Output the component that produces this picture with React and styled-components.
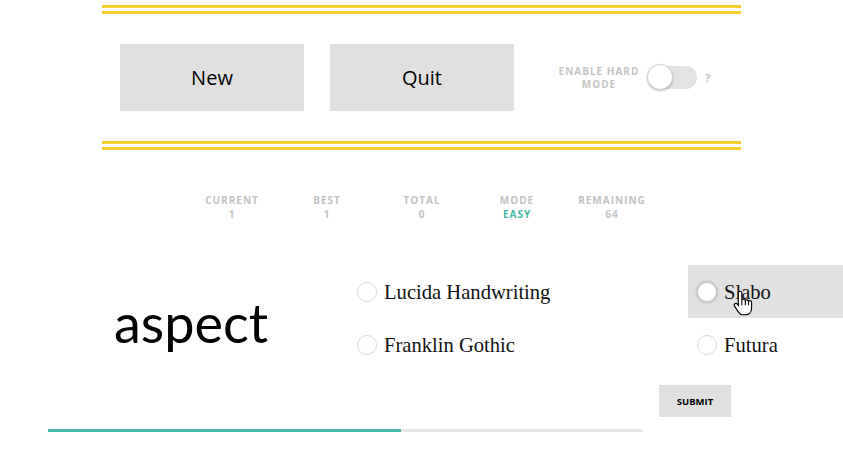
import React from "react";
import styled, { createGlobalStyle } from "styled-components";

const GlobalStyle = createGlobalStyle`
  html, body {
    margin: 0;
    padding: 0;
    background: #ffffff;
    overflow-x: hidden;
  }
  body {
    font-family: "Open Sans", "Liberation Sans", sans-serif;
  }
`;

const stats = [
  { label: "CURRENT", value: "1" },
  { label: "BEST", value: "1" },
  { label: "TOTAL", value: "0" },
  { label: "MODE", value: "EASY", accent: true },
  { label: "REMAINING", value: "64" },
];

const options = [
  { text: "Lucida Handwriting" },
  { text: "Slabo", hover: true },
  { text: "Franklin Gothic" },
  { text: "Futura" },
];

function HandCursor() {
  return (
    <Cursor viewBox="0 0 17 22" width="20" height="26">
      <path
        d="M6 1 C6.8 1 7.5 1.6 7.5 2.5 V8.5 C7.7 8 8.3 7.8 9 7.8 C9.8 7.8 10.3 8.3 10.5 9 C10.7 8.5 11.2 8.3 11.8 8.3 C12.6 8.3 13.1 8.9 13.2 9.5 C13.5 9.1 14 8.9 14.5 9 C15.3 9.1 15.8 9.7 15.8 10.5 V15 C15.8 18.5 13.8 21 10.5 21 H8.5 C6.5 21 5.5 20 4.5 18.5 L1.2 13.5 C0.8 12.8 1 12 1.7 11.6 C2.4 11.2 3.2 11.4 3.7 12 L4.5 13 V2.5 C4.5 1.6 5.2 1 6 1 Z"
        fill="#fff"
        stroke="#000"
        strokeWidth="1"
      />
      <path d="M7.5 8.5 V13 M10.5 9 V13 M13.2 9.5 V13" stroke="#000" strokeWidth="0.9" fill="none" />
    </Cursor>
  );
}

function App() {
  const progress = 59.3;
  return (
    <React.Fragment>
      <GlobalStyle />
      <Header>
        <Rule />
        <Controls>
          <BigButton>New</BigButton>
          <BigButton>Quit</BigButton>
          <ToggleGroup>
            <ToggleLabel>
              ENABLE HARD
              <br />
              MODE
            </ToggleLabel>
            <Track>
              <Knob />
            </Track>
            <Help>?</Help>
          </ToggleGroup>
        </Controls>
        <Rule />
      </Header>

      <Stats>
        {stats.map((s) => (
          <Stat key={s.label}>
            <StatLabel>{s.label}</StatLabel>
            <StatValue $accent={s.accent}>{s.value}</StatValue>
          </Stat>
        ))}
      </Stats>

      <Game>
        <WordBox>
          <Word>aspect</Word>
        </WordBox>
        <Options>
          {options.map((o) => (
            <Option key={o.text} $hover={o.hover}>
              <Radio $hover={o.hover} />
              <OptionText>{o.text}</OptionText>
              {o.hover && <HandCursor />}
            </Option>
          ))}
        </Options>
      </Game>

      <Footer>
        <Submit>SUBMIT</Submit>
        <Progress>
          <ProgressFill style={{ width: `${progress}%` }} />
        </Progress>
      </Footer>
    </React.Fragment>
  );
}

export default App;

const Header = styled.div`
  width: 639px;
  margin: 0 auto;
  padding-top: 5px;
`;

const Rule = styled.div`
  height: 3px;
  border-top: 3px solid #f6cd2e;
  border-bottom: 3px solid #f6cd2e;
`;

const Controls = styled.div`
  display: flex;
  align-items: center;
  gap: 26px;
  padding: 30px 18px 30px;
`;

const BigButton = styled.button`
  width: 184px;
  height: 67px;
  border: none;
  background: #dfe0df;
  color: #000;
  font-family: "Open Sans", sans-serif;
  font-size: 20px;
  padding: 0;
  cursor: pointer;
`;

const ToggleGroup = styled.div`
  display: flex;
  align-items: center;
  margin-left: 15px;
`;

const ToggleLabel = styled.div`
  font-family: "Open Sans", sans-serif;
  font-weight: 700;
  font-size: 10px;
  letter-spacing: 1px;
  line-height: 13px;
  color: #c4c4c4;
  text-align: center;
  width: 88px;
`;

const Track = styled.div`
  position: relative;
  width: 49px;
  height: 23px;
  margin-left: 5px;
  border-radius: 12px;
  background: #e3e3e3;
`;

const Knob = styled.div`
  position: absolute;
  left: -1px;
  top: -2px;
  width: 24px;
  height: 24px;
  border-radius: 50%;
  background: #fff;
  border: 1px solid #d0d0d0;
  box-shadow: 0 1px 2px rgba(0, 0, 0, 0.25);
`;

const Help = styled.span`
  margin-left: 8px;
  font-family: "Open Sans", sans-serif;
  font-weight: 700;
  font-size: 11px;
  color: #c4c4c4;
`;

const Stats = styled.div`
  display: flex;
  justify-content: center;
  margin-top: 43px;
  padding-left: 1px;
`;

const Stat = styled.div`
  width: 95px;
  text-align: center;
  font-family: "Open Sans", sans-serif;
  font-weight: 700;
  font-size: 10px;
  letter-spacing: 1px;
  line-height: 14px;
`;

const StatLabel = styled.div`
  color: #c2c2c2;
`;

const StatValue = styled.div`
  color: ${(p) => (p.$accent ? "#45b8a6" : "#c2c2c2")};
`;

const Game = styled.div`
  display: flex;
  margin-top: 44px;
  padding-left: 48px;
`;

const WordBox = styled.div`
  width: 300px;
  padding-top: 31px;
  padding-left: 66px;
  box-sizing: border-box;
`;

const Word = styled.div`
  font-family: Lato, "Open Sans", sans-serif;
  font-size: 54px;
  line-height: 1;
  color: #000;
`;

const Options = styled.div`
  flex: 1;
  display: grid;
  grid-template-columns: 340px 1fr;
  grid-auto-rows: 53px;
`;

const Option = styled.label`
  position: relative;
  display: flex;
  align-items: center;
  padding-left: 9px;
  background: ${(p) => (p.$hover ? "#e0e1e0" : "transparent")};
  cursor: pointer;
`;

const Radio = styled.span`
  width: 18px;
  height: 18px;
  border-radius: 50%;
  background: #fff;
  border: 1.5px solid ${(p) => (p.$hover ? "#cfcfcf" : "#dadada")};
  box-shadow: ${(p) => (p.$hover ? "0 0 3px rgba(0,0,0,0.35)" : "none")};
  flex-shrink: 0;
`;

const OptionText = styled.span`
  margin-left: 7px;
  padding-top: 2px;
  font-family: "Liberation Serif", serif;
  font-size: 20.6px;
  color: #111;
`;

const Cursor = styled.svg`
  position: absolute;
  left: 45px;
  top: 25px;
`;

const Footer = styled.div`
  display: flex;
  flex-direction: column;
  align-items: flex-start;
  padding-left: 48px;
  margin-top: 14px;
`;

const Submit = styled.button`
  margin-left: 611px;
  width: 72px;
  height: 32px;
  border: none;
  padding: 0;
  background: #dfe0df;
  font-family: "Open Sans", sans-serif;
  font-weight: 700;
  font-size: 9.5px;
  color: #000;
  cursor: pointer;
`;

const Progress = styled.div`
  margin-top: 12px;
  width: 595px;
  height: 3px;
  background: #e8e8e8;
`;

const ProgressFill = styled.div`
  height: 100%;
  background: #45bba8;
`;
